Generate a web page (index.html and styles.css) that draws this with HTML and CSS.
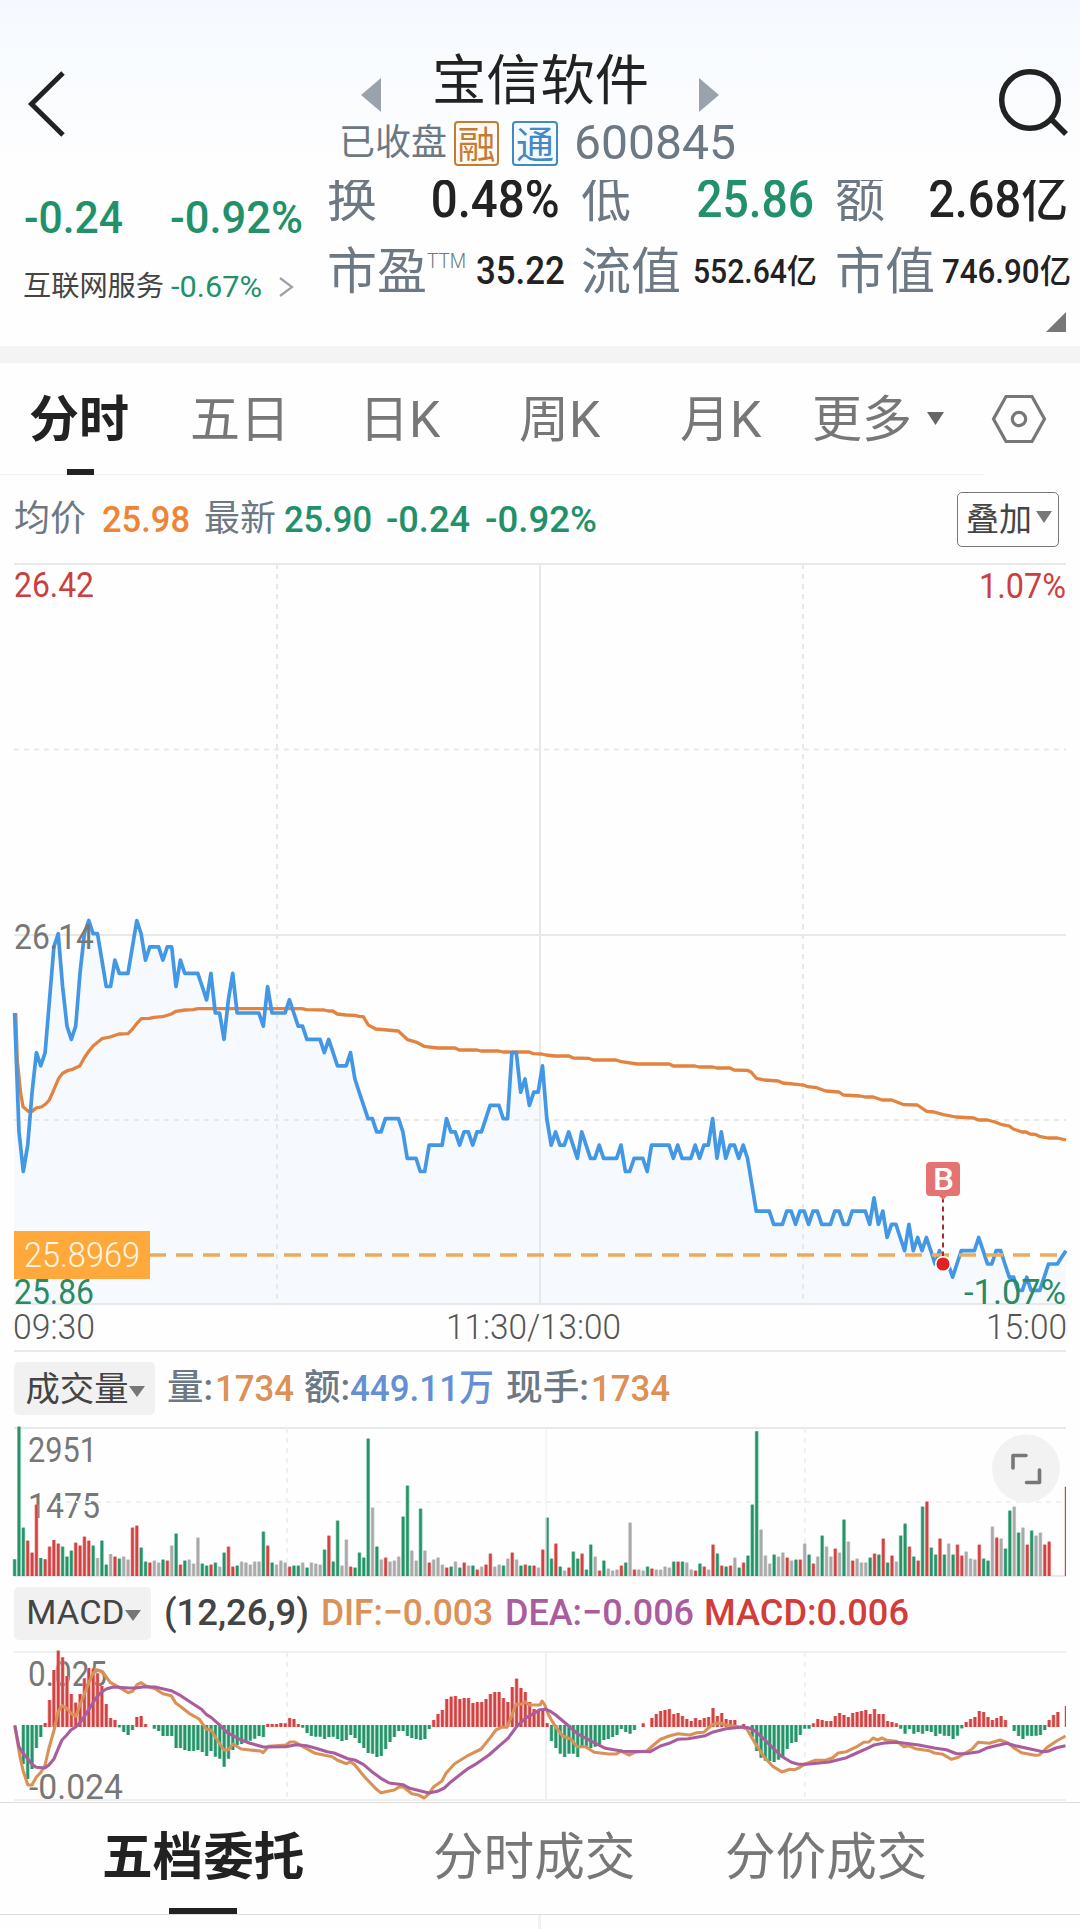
FILE: index.html
```html
<!DOCTYPE html>
<html lang="zh-CN">
<head>
<meta charset="utf-8">
<title>宝信软件 600845</title>
<link rel="stylesheet" href="styles.css">
</head>
<body>
<header class="topbar">
  <svg class="icon-back" width="40" height="70" viewBox="0 0 40 70"><path d="M36 4 4.5 35 36 66"/></svg>
  <div class="title-block">
    <div class="title-row">
      <svg width="20" height="34" viewBox="0 0 20 34"><path class="arrow" d="M20 0v34L0 17z"/></svg>
      <h1 class="fit" data-w="217">宝信软件</h1>
      <svg width="20" height="34" viewBox="0 0 20 34"><path class="arrow" d="M0 0v34l20-17z"/></svg>
    </div>
    <div class="sub-row">
      <span class="state">已收盘</span><span class="badge margin">融</span><span class="badge connect">通</span><span class="code fit" data-w="162">600845</span>
    </div>
  </div>
  <svg class="icon-search" width="74" height="74" viewBox="0 0 74 74"><circle cx="34" cy="34" r="28.3"/><path d="m55 53 15 15"/></svg>
</header>

<section class="quote">
  <div class="change">
    <div class="change-row green"><span class="fit" data-w="99">-0.24</span><span class="fit" data-w="133">-0.92%</span></div>
    <div class="sector-row"><span class="fit" data-w="141">互联网服务</span><span class="green fit" data-w="91">-0.67%</span>
      <svg width="16" height="22" viewBox="0 0 16 22"><path d="m2 2 12 9-12 9"/></svg></div>
  </div>
  <div class="stats">
    <div class="stat"><span class="k">换</span><span class="v fit" data-w="129">0.48%</span></div>
    <div class="stat"><span class="k">低</span><span class="v green fit" data-w="118">25.86</span></div>
    <div class="stat"><span class="k">额</span><span class="v fit" data-w="140">2.68亿</span></div>
    <div class="stat"><span class="k">市盈<sup class="fit" data-w="39">TTM</sup></span><span class="v mid fit" data-w="89">35.22</span></div>
    <div class="stat"><span class="k">流值</span><span class="v small fit" data-w="124">552.64亿</span></div>
    <div class="stat"><span class="k">市值</span><span class="v small fit" data-w="129">746.90亿</span></div>
  </div>
  <svg class="corner" width="20" height="20" viewBox="0 0 20 20"><path d="M20 0v20H0z"/></svg>
</section>

<nav class="periods">
  <span class="active">分时</span><span>五日</span><span>日K</span><span>周K</span><span>月K</span><span>更多</span>
  <svg class="caret" width="17" height="13" viewBox="0 0 17 13"><path d="M0 0h17L8.500 13z"/></svg>
  <svg class="icon-settings" width="56" height="50" viewBox="0 0 56 50"><path d="M15 2.500h26L53.500 25 41 47.500H15L2.500 25z"/><circle cx="28" cy="25" r="6.700"/></svg>
</nav>

<section class="legend">
  <span class="k">均价</span><span class="n orange fit" data-w="88">25.98</span>
  <span class="k">最新</span><span class="n green fit" data-w="88">25.90</span>
  <span class="n green fit" data-w="84">-0.24</span><span class="n green fit" data-w="112">-0.92%</span>
  <button class="overlay">叠加<svg width="16" height="12" viewBox="0 0 16 12"><path d="M0 0h16L8 12z"/></svg></button>
</section>

<svg class="chart price" width="1080" height="790" viewBox="0 562 1080 790">
  <path id="price-area" class="area"/>
  <path class="grid dashed" d="M14 749.500H1066M14 1120H1066M277 564V1304M803 564V1304"/>
  <path class="grid" d="M14 564H1066M14 935H1066M14 1304H1066M540 564V1304M14 1351H1066"/>
  <path id="avg-line" class="avg"/>
  <path id="price-line" class="last"/>
  <path class="cost" d="M149 1255H1066"/>
  <rect class="cost-tag" x="14" y="1231" width="136" height="48"/>
  <text class="cost-text" x="24" y="1267" textLength="116">25.8969</text>
  <path class="buy-stem" d="M943 1197.500V1256"/>
  <circle class="buy-dot" cx="943" cy="1264" r="7.300"/>
  <path class="buy-flag" d="M930 1162h26a4 4 0 0 1 4 4v26a4 4 0 0 1-4 4h-9l-4 4-4-4h-9a4 4 0 0 1-4-4v-26a4 4 0 0 1 4-4z"/>
  <text class="buy-text" x="933" y="1190" textLength="21">B</text>
  <text class="red-text" x="14" y="597" textLength="80">26.42</text>
  <text class="red-text" x="979" y="598" textLength="87">1.07%</text>
  <text x="14" y="949" textLength="80">26.14</text>
  <text class="green-text" x="14" y="1304" textLength="80">25.86</text>
  <text class="green-text" x="964" y="1304" textLength="102">-1.07%</text>
  <text class="time" x="13" y="1339" textLength="82">09:30</text>
  <text class="time" x="446" y="1339" textLength="175">11:30/13:00</text>
  <text class="time" x="986" y="1339" textLength="81">15:00</text>
</svg>

<section class="indicator-bar volume-bar">
  <button><span class="fit" data-w="103">成交量</span><svg width="16" height="11" viewBox="0 0 16 11"><path d="M0 0h16L8 11z"/></svg></button>
  <span class="slate fit" data-w="46">量:</span><span class="amber fit" data-w="79">1734</span>
  <span class="slate fit" data-w="46">额:</span><span class="blue fit" data-w="144">449.11万</span>
  <span class="slate fit" data-w="83">现手:</span><span class="amber fit" data-w="79">1734</span>
</section>

<svg class="chart volume" width="1080" height="162" viewBox="0 1422 1080 162">
  <path class="grid" d="M14 1428H1066M14 1576H1066"/>
  <text x="28" y="1462" textLength="69">2951</text>
  <text x="28" y="1518" textLength="72">1475</text>
  <path class="grid faint dashed" d="M56 1502H1066M287 1428V1576M805 1428V1576"/>
  <g id="volume-bars"></g>
  <path class="grid divider" d="M546 1428V1576"/>
  <circle class="expand-bg" cx="1026" cy="1468.500" r="34"/>
  <path class="expand" d="M1013 1468v-12.500h13M1039.500 1470v12.500h-13"/>
</svg>

<section class="indicator-bar macd-bar">
  <button><span class="fit" data-w="98">MACD</span><svg width="16" height="11" viewBox="0 0 16 11"><path d="M0 0h16L8 11z"/></svg></button>
  <span class="dark fit" data-w="145">(12,26,9)</span>
  <span class="amber fit" data-w="172">DIF:−0.003</span>
  <span class="purple fit" data-w="189">DEA:−0.006</span>
  <span class="red fit" data-w="205">MACD:0.006</span>
</section>

<svg class="chart macd" width="1080" height="156" viewBox="0 1646 1080 156">
  <path class="grid faint" d="M14 1652H1066M14 1800H1066M546 1652V1800"/>
  <path class="grid faint dashed" d="M287 1652V1800M805 1652V1800"/>
  <text x="28" y="1686" textLength="79">0.025</text>
  <text x="29" y="1799" textLength="94">-0.024</text>
  <g id="macd-bars"></g>
  <path id="dif-line" class="dif"/>
  <path id="dea-line" class="dea"/>
</svg>

<nav class="depth-tabs">
  <span class="active">五档委托</span><span>分时成交</span><span>分价成交</span>
</nav>
<div class="depth-panel"><div></div><div></div></div>
<script src="chart.js"></script>
</body>
</html>
```
FILE: styles.css
```css
* { box-sizing: border-box; }
body {
  margin: 0;
  width: 1080px;
  height: 1929px;
  overflow: hidden;
  background: linear-gradient(#f5f9ff, #fefefe 170px);
  font-family: Roboto, "Noto Sans CJK SC", sans-serif;
  color: #222;
  line-height: 1;
  white-space: nowrap;
}
svg { display: block; flex: none; }
.fit { display: inline-block; transform-origin: left center; }
.green { color: #22916a; }
.red { color: #d23c39; }
.orange { color: #ee8434; }
.amber { color: #db9157; }
.blue { color: #648fd2; }
.purple { color: #ab5c9f; }
.slate { color: #6c7883; }
.dark { color: #444; }

.topbar { display: flex; height: 180px; padding: 0 10px 0 27px; justify-content: space-between; }
.icon-back { margin-top: 69px; fill: none; stroke: #222; stroke-width: 5; }
.icon-search { margin-top: 66px; fill: none; stroke: #222; stroke-width: 5.5; }
.title-block { width: 402px; margin-left: 13px; }
.title-row { display: flex; height: 112px; padding: 0 20px 0 24px; align-items: flex-end; justify-content: space-between; }
.title-row h1 { margin: 0 0 3px; font-size: 54px; font-weight: 400; }
.arrow { fill: #9aa3ad; }
.sub-row { display: flex; height: 62px; align-items: center; color: #6c7883; }
.state { width: 121px; padding-left: 2px; font-size: 36px; }
.badge {
  width: 47px; height: 45px; margin-right: 13px;
  border: 2px solid; border-radius: 4px;
  font-size: 38px; line-height: 44px; text-align: center;
  display: flex; justify-content: center;
}
.badge.margin { color: #c67b35; background: #fffaf3; }
.badge.connect { color: #4488c6; background: #f4faff; margin-right: 16px; }
.code { font-size: 49px; position: relative; top: -1px; }

.quote { position: relative; display: flex; height: 166px; overflow: hidden; background: #fefefe; }
.change { width: 328px; padding-left: 24px; }
.change-row { display: grid; grid-template-columns: 146px 1fr; height: 75px; align-items: center; font-size: 45px; font-weight: 500; }
.sector-row { display: grid; grid-template-columns: 147px 109px 1fr; height: 64px; align-items: center; font-size: 30px; color: #444; }
.sector-row > :first-child { font-size: 28.5px; margin-left: -1px; }
.sector-row svg { fill: none; stroke: #9aa3ad; stroke-width: 2.2; margin-left: -2px; }
.stats { display: grid; grid-template-columns: 232px 232px 232px; column-gap: 22px; grid-template-rows: 38px 106px; align-items: center; }
.stat { display: flex; align-items: center; justify-content: space-between; }
.stat .k { font-size: 50px; color: #6c7883; margin-left: -1px; margin-top: 2px; }
.stat sup { font-size: 20px; font-weight: 300; vertical-align: 21px; line-height: 0; }
.stat .v { font-size: 51px; font-weight: 500; transform-origin: right center; }
.stat .v.mid { font-size: 38px; margin-right: 3px; }
.stat .v.small { font-size: 33px; }
.corner { position: absolute; right: 14px; bottom: 14px; fill: #777; }

.periods {
  display: grid;
  grid-template-columns: 161px 169px 160px 161px 132px 115px 64px 1fr;
  height: 128px; padding-left: 29px;
  border-top: 17px solid #f4f4f4;
  align-items: center;
  background: #fefefe;
  font-size: 50px; color: #777;
}
.periods span { position: relative; top: 1px; }
.periods .active { color: #222; font-weight: 700; }
.periods .active::after { content: ""; position: absolute; left: 38px; top: 74px; width: 27px; height: 6px; background: #222; }
.caret { fill: #666; }
.icon-settings { fill: none; stroke: #777; stroke-width: 3.2; }

.legend {
  display: grid;
  grid-template-columns: 88px 102px 80px 102px 99px 472px 102px;
  height: 88px; padding: 0 0 0 14px;
  align-items: center;
  font-size: 37px; font-weight: 500;
  background: linear-gradient(#f1f1f1, #f1f1f1) 0 0 / 985px 1px no-repeat #fefefe;
}
.legend > span { position: relative; top: 1px; }
.legend .k { font-size: 36px; font-weight: 400; color: #6c7883; }
.overlay {
  display: flex; align-items: center; gap: 4px;
  height: 55px; padding: 0 0 0 8px; margin-top: 2px;
  border: 1.500px solid #777; border-radius: 5px;
  background: none; color: #444;
  font: 33px/1 Roboto, "Noto Sans CJK SC", sans-serif;
}
.overlay svg { margin-top: -4px; }
.overlay svg, .indicator-bar svg { fill: #777; }

.chart { background: #fefefe; font-size: 35px; }
.chart text { fill: #777; }
.grid { fill: none; stroke: #e7e8e8; stroke-width: 2; }
.grid.faint { stroke: #f0f0f0; }
.grid.divider { stroke: #f0f0f0; stroke-opacity: .6; }
.grid.dashed { stroke-dasharray: 5 5; }
.area { fill: #f6faff; }
.avg, .last, .dif, .dea { fill: none; stroke-width: 3.7; stroke-linejoin: round; }
.avg { stroke: #e2833f; stroke-width: 3.3; }
.last { stroke: #4497e4; }
.dif { stroke: #d89257; stroke-width: 3.1; }
.dea { stroke: #a95d9d; stroke-width: 3.1; }
.cost { fill: none; stroke: #ecab59; stroke-width: 3.3; stroke-dasharray: 17 10; }
.cost-tag { fill: #ffa83c; }
.chart .cost-text { fill: #fff8e4; font-weight: 300; }
.buy-stem { stroke: #aa2b2b; stroke-width: 2; stroke-dasharray: 5 4; }
.buy-dot { fill: #df2222; stroke: #fff; stroke-width: 1.500; }
.buy-flag { fill: #e57373; }
.chart .buy-text { fill: #fff; font-size: 32px; font-weight: 500; }
.chart .red-text { fill: #ca403f; }
.chart .green-text { fill: #298a63; }
.chart .time { font-weight: 300; fill: #555; }
.expand-bg { fill: #f2f2f2; }
.expand { fill: none; stroke: #777; stroke-width: 3.6; stroke-linecap: round; stroke-linejoin: round; }

.indicator-bar { display: grid; align-items: center; height: 70px; padding-left: 14px; background: #fefefe; font-size: 37px; font-weight: 500; }
.volume-bar { grid-template-columns: 153px 48px 89px 46px 156px 85px 1fr; }
.volume-bar > span { position: relative; top: 1px; }
.volume-bar .slate { font-size: 36px; }
.macd-bar { height: 62px; grid-template-columns: 150px 157px 184px 199px 1fr; }
.macd-bar > span { position: relative; top: -3px; }
.indicator-bar button {
  display: flex; align-items: center;
  width: 141px; height: 53px; padding: 0 0 0 10px; margin-top: 3px;
  border: 0; border-radius: 5px; background: #f1f1f1; color: #444;
  font: 34px/1 Roboto, "Noto Sans CJK SC", sans-serif;
}
.indicator-bar button .fit { width: 105px; }
.indicator-bar button svg { margin-top: 6px; }
.macd-bar button { width: 137px; margin-top: -4px; padding-bottom: 2px; }
.macd-bar button .fit { width: 101px; }

.depth-tabs {
  display: grid;
  grid-template-columns: 331px 292px 1fr;
  height: 113px; padding-left: 102px;
  align-items: center;
  border-top: 1px solid #ddd; border-bottom: 1px solid #ddd;
  background: #fefefe; font-size: 50.6px; color: #777;
}
.depth-tabs span { position: relative; }
.depth-tabs .active { color: #222; font-weight: 700; }
.depth-tabs .active::after { content: ""; position: absolute; left: 67px; top: 75px; width: 68px; height: 6px; background: #222; }
.depth-panel { display: grid; grid-template-columns: 541px 1fr; height: 14px; background: #fefefe; }
.depth-panel div:first-child { border-right: 3px solid #f1f1f1; }
```
FILE: chart.js
```js
// Figures keep their column width whatever font is available.
for (const el of document.querySelectorAll('.fit')) {
  const range = document.createRange();
  range.selectNodeContents(el);
  const natural = range.getBoundingClientRect().width;
  el.style.transform = `scaleX(${Number(el.dataset.w) / natural})`;
}
for (const t of document.querySelectorAll('.chart text')) {
  t.setAttribute('lengthAdjust', 'spacingAndGlyphs');
}

const X0 = 14, STEP = 1052 / 241;
const pathOf = pts => 'M' + pts.map(p => p.map(v => v.toFixed(1)).join(' ')).join('L');
const draw = (id, d) => document.getElementById(id).setAttribute('d', d);

// Each minute's price, in ticks of 0.01 below 26.14.
const ticks = [
  6,15,18,16,12,9,10,9,5,1,0,4,7,8,7,3,0,-1,0,0,2,4,4,2,3,3,3,1,-1,0,2,1,1,1,2,1,1,4,2,3,
  3,3,3,4,5,3,6,6,8,5,3,6,6,6,6,6,6,7,4,6,6,6,6,5,6,7,7,8,8,8,8,9,8,9,10,10,10,9,11,12,
  13,14,14,15,15,14,14,14,14,15,17,17,17,18,18,16,16,16,16,14,15,15,16,15,15,16,15,15,14,13,
  13,13,14,14,9,9,12,11,13,12,12,10,14,16,15,16,16,15,16,17,15,16,17,17,16,17,17,17,17,16,
  18,18,17,17,17,18,16,16,16,16,16,17,16,17,17,17,16,17,16,16,14,17,15,17,16,16,17,16,17,19,
  21,21,21,21,22,22,22,21,21,22,21,21,22,21,21,22,22,22,21,21,22,22,21,21,21,21,22,20,22,21,
  23,22,22,23,24,22,24,23,24,23,24,25,24,25,25,26,25,24,24,24,24,23,24,25,25,24,24,25,26,26,
  27,27,26,27,27,27,26,25,25,25,24.5,24
];
const price = ticks.map((n, i) => [X0 + .6 + i * (STEP - .0025), 933.7 + n * 13.21]);
draw('price-line', pathOf(price));
draw('price-area', pathOf(price) + 'L1066 1304L14 1304Z');

// Lines are stored in sections: origin, units per pixel, flat x,y list.
const section = (ox, oy, sx, sy, list) => {
  const pts = [];
  for (let i = 0; i < list.length; i += 2) pts.push([ox + list[i] / sx, oy + list[i + 1] / sy]);
  return pts;
};

draw('avg-line', pathOf([
  ...section(0, 900, 3, 3, [47,339,52,480,62,580,69,620,85,634,97,634,108,624,124,621,137,612,148,600,162,568,176,535,188,520,202,512,215,509,240,497,253,473,267,453,280,437,306,416,330,411,357,402,384,401,397,388,411,370,424,356,448,355,462,352,488,350,514,342,528,334,555,330,580,329,594,326,905,326,920,329,972,330,985,333,998,333,1012,342,1038,345,1064,346]),
  ...section(360, 980, 3, 3, [0,110,10,110,25,135,47,147,115,153,143,179,170,187,192,199,232,204,285,204,298,210,350,210,363,213,415,213,430,216,508,216,520,221,545,222,558,225,585,228,627,228,640,234,685,235,700,240,768,240,784,245,832,252,928,252,940,258,1005,258,1017,261,1058,261,1071,264]),
  ...section(720, 1040, 3, 3, [0,84,30,84,42,90,82,91,94,97,109,115,132,120,175,123,188,129,238,134,250,135,263,140,290,143,317,153,357,156,370,165,420,168,435,171,460,171,486,180,515,180,552,194,592,195,620,214,642,216,670,224,708,231,762,234,775,240,802,240,825,246,842,253,868,258,880,267,906,276,918,276,930,282,945,283,958,289,984,294,1012,294,1038,300])
]));

const SX = 2.9037;
draw('dif-line', pathOf([
  ...section(0, 1580, SX, 3, [43,438,50,480,58,530,67,572,81,615,93,615,105,592,119,577,131,555,142,505,157,450,168,397,180,377,194,385,206,400,221,408,232,375,244,345,258,308,270,280,282,269,298,276,308,290,320,307,346,322,372,338,386,333,398,314,410,308,424,318,450,326,473,341,497,347,511,370,525,380,549,400,578,417,600,448,613,450,627,474,650,510,662,510,677,492,700,507,726,510,756,513,764,518,780,499,830,495,842,486,856,486,890,506,915,520,965,530,980,541,1006,551,1018,545,1030,554,1058,590,1093,628,1106,638,1145,630,1160,620,1172,622,1196,641,1215,645,1232,654,1246,640,1258,622,1283,603,1295,580,1320,551,1360,526,1397,507,1420,478,1440,450,1455,442,1472,442,1487,405,1498,373,1512,373,1524,366,1538,375]),
  ...section(540, 1580, SX, 3, [0,375,6,363,14,375,25,405,45,440,65,467,90,478,108,500,132,500,157,517,200,522,222,522,235,513,259,525,275,517,310,513,330,495,350,478,375,468,400,461,435,465,455,458,475,457,499,435,511,430,525,430,540,435,585,442,600,446,625,490,650,530,677,560,703,576,725,568,740,569,755,562,768,553,800,541,830,541,850,533,866,519,890,515,920,500,940,487,955,486,967,474,980,480,993,474,1007,481,1035,484,1057,500,1070,497,1090,506,1130,512,1145,519,1170,523,1195,538,1215,532,1235,519,1255,507,1272,487,1305,490,1336,480,1360,490,1375,503,1398,518,1437,526,1450,525,1475,500,1500,483,1526,468])
]));
draw('dea-line', pathOf([
  ...section(0, 1580, SX, 3, [43,436,55,500,67,520,81,537,93,553,105,562,130,564,142,555,157,536,168,508,180,480,194,465,206,450,221,440,232,428,244,411,258,388,270,368,282,350,296,335,310,326,330,321,375,324,395,324,420,320,450,321,497,332,525,347,560,371,585,388,600,404,613,412,636,433,660,458,700,480,726,490,765,501,830,500,860,494,890,497,915,504,950,515,970,519,1010,536,1030,540,1055,553,1080,575,1106,595,1130,609,1170,614,1190,625,1245,639,1270,634,1290,624,1310,605,1345,577,1360,565,1385,550,1420,525,1445,502,1475,475,1500,440,1525,415,1550,400]),
  ...section(540, 1580, SX, 3, [0,389,15,388,30,394,45,404,80,435,110,462,150,484,190,505,240,514,320,515,350,498,375,490,400,478,430,476,480,467,500,457,540,446,590,441,605,443,625,453,650,477,675,503,700,528,730,547,750,553,775,553,840,546,890,533,920,519,950,505,970,495,1000,489,1035,487,1060,490,1100,495,1145,504,1180,509,1210,521,1235,521,1275,515,1300,503,1330,496,1355,490,1380,497,1437,510,1460,515,1475,514,1500,503,1526,497])
]));

// A bar is a soft body with a darker core.
const COLORS = { g: ['#7ccfae', '#2b9068'], r: ['#f59797', '#cc4443'], y: ['#d0d0d0', '#a9a9a9'] };
const bars = (id, list) => {
  let out = '';
  for (const [i, c, y1, y2] of list) {
    const x = Math.min(X0 + .6 + i * STEP, 1066), h = y2 - y1;
    const w = Math.min(1.9, 1066 - x);
    const [soft, core] = COLORS[c];
    out += `<rect x="${x - 1.9}" y="${y1}" width="${1.9 + w}" height="${h}" fill="${w ? soft : 'none'}"/><rect x="${x - 1.2}" y="${y1}" width="${1.2 + Math.min(1.2, w)}" height="${h}" fill="${core}"/>`;
  }
  document.getElementById(id).innerHTML = out;
};

const volume = `g628 g230 g533 r572 r608 r464 g624 r628 r590 r570 r581 g590 g620 g602 r578 r587 r560 r572 g587 y624
g572 g644 y612 r620 g626 y620 y629 r533 r527 g593 g635 r638 y632 y638 g629 r632 y587 g551 r644 g632
y629 y641 y563 g641 g647 r644 g638 y650 g608 r590 r650 g647 y635 y638 y644 y635 y635 g545 r587 g638
y644 y632 y638 r650 g647 g647 y638 g653 y638 y641 y644 g599 r557 g635 g512 y647 y569 r650 g653 g608
g623 g266 y473 g590 y629 r623 y635 y632 y620 g500 g407 y602 y632 g476 y602 r638 y629 y623 y644 r653
g650 y635 g653 r638 y647 g647 r659 y650 r644 r611 y650 y644 g647 y626 r608 y629 g647 r644 g647 r647
y653 r599 g503 g626 r581 g650 y662 r653 g605 g626 r611 g659 g584 y620 r662 g632 y656 y662 y659 r647
g638 y518 r659 y659 y662 g650 r656 y659 y659 y650 y653 g635 r635 g635 y638 y659 r662 g641 r650 y659
r584 g611 r647 g650 r647 y623 g653 r638 g617 g464 g244 y539 y617 y641 g614 y620 y608 r623 y632 g629
r629 y581 g614 r641 y620 g557 y590 y620 r596 y608 g509 y575 r632 y626 y638 y638 g623 r611 g614 r566
g638 r617 y635 g557 g521 r590 g620 r632 g470 r455 g593 g614 r566 g614 y581 g614 r584 r617 y605 y626
y629 r584 g626 g632 y530 r563 y566 g596 g482 y470 g548 y533 r584 g542 y557 y548 r584 r575 - - - r410`.split(/\s+/);
bars('volume-bars', volume.flatMap((s, i) => s === '-' ? [] : [[i, s[0], 1350 + s.slice(1) / 3, 1576]]));

const ZERO = 438;
const macd = [
  438,438,552,597,567,504,471,429,360,270,212,232,288,342,368,342,295,264,266,280,318,372,414,420,442,456,465,450,411,408,
  432,438,446,453,468,468,468,504,504,510,513,513,510,516,528,513,530,536,560,536,510,495,492,488,482,476,468,471,432,432,
  432,429,430,414,417,432,443,459,468,470,470,477,471,470,477,483,480,465,474,489,504,519,521,531,528,507,486,471,453,453,
  468,474,477,480,477,447,420,402,390,357,350,348,357,354,354,369,366,366,357,342,336,336,354,366,321,296,324,336,366,387,
  390,390,429,483,504,521,531,521,521,531,504,500,504,500,492,480,477,471,465,447,456,461,450,438,430,438,414,402,393,390,
  387,402,399,408,417,423,414,420,414,411,384,408,399,417,420,420,438,432,438,471,513,533,542,543,546,539,530,507,489,486,
  465,446,446,430,417,420,423,423,408,399,405,411,399,396,393,390,402,387,402,402,423,426,430,446,461,447,461,456,461,453,
  456,468,461,467,468,477,467,445,426,417,411,393,396,411,420,414,408,420,438,453,468,477,467,468,467,465,450,420,405,396,
  438,378
];
bars('macd-bars', macd.flatMap((v, i) => {
  if (v === ZERO) return [];
  const up = v < ZERO, y = 1580 + v / 3;
  return [[i, up ? 'r' : 'g', up ? y : 1725, up ? 1727 : y]];
}));
```
